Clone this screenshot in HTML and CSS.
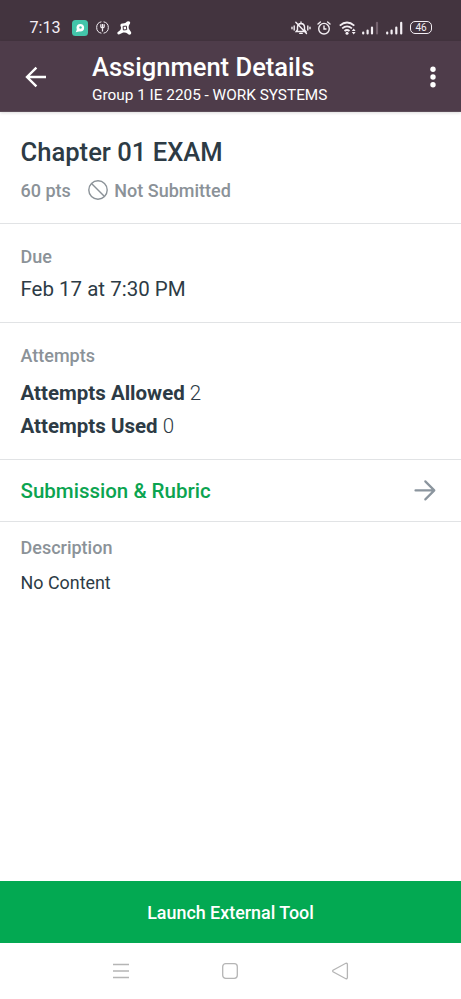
FILE: index.html
```html
<!DOCTYPE html>
<html lang="en">
<head>
<meta charset="utf-8">
<title>Assignment Details</title>
<link rel="stylesheet" href="styles.css">
</head>
<body>
<div class="status">
  <span class="clock">7:13</span>
  <svg class="s-chat" width="16" height="16" viewBox="0 0 16 16"><rect width="16" height="16" rx="3.5" fill="#43c5aa"/><circle cx="8.3" cy="7.7" r="3.8" fill="#fff"/><path d="M3.8 12.2L5.2 8.8L7.6 11.2Z" fill="#fff"/><circle cx="8.5" cy="7.5" r="1.2" fill="#43c5aa"/></svg>
  <svg class="s-fork" width="13" height="13" viewBox="0 0 13 13" fill="none" stroke="#f4eff4"><path d="M5.4 .8A5.8 5.8 0 0 0 5.4 12.2M7.6 .8A5.8 5.8 0 0 1 7.6 12.2" stroke-width="1"/><path d="M4.8 3.3V5.5Q4.8 6.8 6.5 6.8T8.2 5.5V3.3M6.5 3V10.6" stroke-width="1.2"/></svg>
  <svg class="s-avast" width="15" height="14" viewBox="0 0 15 14"><path d="M4 3.1Q4.4 2.3 5.6 2.6Q8.5 2.7 10.1 .6Q11.6-.4 12.9 .8Q13.6 2.2 12.4 3.6Q11.1 5.4 12 8.1L14 10.9Q14.7 12.6 13.2 13.5Q12 14 10.7 12.8Q8.8 11 6.2 11.5L2.5 13.3Q.8 13.7.3 12.2Q.1 11 1.5 10.4Q4.4 9 4 6.4L3.4 4.4Q3.3 3.5 4 3.1Z" fill="#fff"/><path d="M6.1 5.4L9.4 5.1L9.7 8.6L6.4 9Z" fill="none" stroke="#44343f" stroke-width="1"/></svg>
  <svg class="s-bell" width="20" height="14" viewBox="0 0 20 14" fill="none" stroke="#f4eff4" stroke-width="1.4" stroke-linecap="round"><path d="M5.2 10.5H14.8L13.5 8.8V5.8Q13.2 2.7 10 2.5Q6.8 2.7 6.5 5.8V8.8ZM10 1V2.5M8.8 12.4H11.2M4.8 1.3L15.5 12.6M3.2 5V9M1 6.2V7.8M16.8 5V9M19 6.2V7.8"/></svg>
  <svg class="s-alarm" width="14" height="14" viewBox="0 0 14 14" fill="none" stroke="#f4eff4" stroke-width="1.4" stroke-linecap="round"><circle cx="7" cy="7.7" r="5.3"/><path d="M7 5V8H9M1 3L3.4 1M13 3L10.6 1"/></svg>
  <svg class="s-wifi" width="18" height="14" viewBox="0 0 18 14" fill="none" stroke="#f4eff4" stroke-width="1.8"><path d="M.8 4.6Q8 -1.7 15.3 4.6M3.2 7.4Q8 3.3 12.9 7.4M5.5 10Q8 7.9 10.5 10"/><circle cx="8" cy="12.2" r="1.5" fill="#f4eff4" stroke="none"/><path d="M12.8 10L14.7 7.5L16.6 10ZM12.8 11L14.7 13.5L16.6 11Z" fill="#f4eff4" stroke="none"/></svg>
  <svg class="s-sig1" width="17" height="14" viewBox="0 0 17 14" fill="none" stroke="#f4eff4" stroke-width="2.2" stroke-linecap="round"><path d="M1.2 11.5V12.5M5.6 9.5V12.5M10 6.5V12.5"/><path d="M15 1.8V12.5" stroke="#75636f"/></svg>
  <svg class="s-sig2" width="17" height="14" viewBox="0 0 17 14" fill="none" stroke="#f4eff4" stroke-width="2.2" stroke-linecap="round"><path d="M1.2 11.5V12.5M5.6 9.5V12.5M10.3 6.5V12.5M15.2 1.8V12.5"/></svg>
  <span class="battery">46</span>
</div>
<header class="appbar">
  <svg class="back" width="22" height="22" viewBox="0 0 22 22" fill="none" stroke="#fff" stroke-width="2.4"><path d="M21 11H2.2M11.4 1.6L2 11L11.4 20.4"/></svg>
  <div class="titles">
    <h1>Assignment Details</h1>
    <p>Group 1 IE 2205 - WORK SYSTEMS</p>
  </div>
  <svg class="more" width="6" height="22" viewBox="0 0 6 22" fill="#fff"><circle cx="3" cy="3.3" r="2.7"/><circle cx="3" cy="11" r="2.7"/><circle cx="3" cy="18.7" r="2.7"/></svg>
</header>
<main>
  <section class="summary">
    <h2>Chapter 01 EXAM</h2>
    <div class="meta">
      <span class="points">60 pts</span>
      <svg width="22" height="22" viewBox="0 0 22 22" fill="none" stroke="#8b9298" stroke-width="1.4"><circle cx="11" cy="11" r="9.2"/><path d="M4.5 4.5L17.5 17.5"/></svg>
      <span class="state">Not Submitted</span>
    </div>
  </section>
  <section class="due">
    <h3>Due</h3>
    <p class="date">Feb 17 at 7:30 PM</p>
  </section>
  <section class="attempts">
    <h3>Attempts</h3>
    <p class="allowed"><b>Attempts Allowed</b> <span>2</span></p>
    <p class="used"><b>Attempts Used</b> <span>0</span></p>
  </section>
  <section class="rubric">
    <span>Submission &amp; Rubric</span>
    <svg width="22" height="22" viewBox="0 0 22 22" fill="none" stroke="#8b959e" stroke-width="2.2" stroke-linecap="round" stroke-linejoin="round"><path d="M1.5 11.4H20.2M11.3 2.4L20.3 11.4L11.3 20.4"/></svg>
  </section>
  <section class="description">
    <h3>Description</h3>
    <p>No Content</p>
  </section>
</main>
<button class="launch">Launch External Tool</button>
<nav>
  <svg width="18" height="18" viewBox="0 0 18 18" fill="none" stroke="#b5b5b5" stroke-width="1.3"><path d="M1 2.5H17M1 9H17M1 15.5H17"/></svg>
  <svg width="18" height="18" viewBox="0 0 18 18" fill="none" stroke="#b5b5b5" stroke-width="1.3"><rect x="1.7" y="1.7" width="14.6" height="14.6" rx="3"/></svg>
  <svg width="18" height="18" viewBox="0 0 18 18" fill="none" stroke="#b5b5b5" stroke-width="1.3"><path d="M2 8.2Q1.2 9 2 9.8L14.8 16.7Q16.2 17 16.4 15.7V2.3Q16.2 1 14.8 1.3Z"/></svg>
</nav>
</body>
</html>
```
FILE: styles.css
```css
* { box-sizing: border-box; }
body {
  margin: 0;
  height: 999px;
  display: flex;
  flex-direction: column;
  background: #fff;
  color: #2d3b45;
  font-family: Roboto, "Liberation Sans", sans-serif;
}
h1, h2, h3, p { margin: 0; font-weight: 500; }
svg { display: block; flex: none; }

.status {
  height: 41px;
  padding: 15px 29px 0 29.5px;
  display: flex;
  align-items: flex-start;
  flex: none;
  background: #43343f;
  color: #f4eff4;
}
.status svg { margin-top: 6px; }
.clock { width: 42px; font-size: 16.2px; line-height: 26px; }
.status .s-chat { margin-top: 5px; }
.s-fork { margin-left: 8px; }
.s-avast { margin-left: 8px; }
.s-bell { margin-left: auto; }
.s-alarm { margin-left: 6px; }
.s-wifi { margin-left: 8px; }
.s-sig1 { margin-left: 5px; }
.s-sig2 { margin-left: 7px; }
.battery {
  width: 22px;
  height: 13px;
  margin: 6px 0 0 7px;
  border: 1.5px solid #f4eff4;
  border-radius: 5px;
  font-size: 10px;
  line-height: 11px;
  text-align: center;
}

.appbar {
  height: 71px;
  flex: none;
  display: flex;
  align-items: center;
  padding: 0 25px;
  background: #4e3c4a;
  color: #fff;
  border-bottom: 1px solid #5d4d59;
  box-shadow: 0 1px 3px rgba(0, 0, 0, .14);
}
.appbar svg { margin-top: 1px; }
.titles { margin-left: 45px; padding-top: 4px; flex: 1; }
.appbar h1 { font-size: 25.55px; line-height: 30px; }
.appbar p { font-size: 15.35px; line-height: 20px; margin-top: 3px; font-weight: 400; }

main { flex: 1; }
section { border-bottom: 1px solid #e1e3e5; padding: 0 20.5px; }
h3 { color: #8b9298; font-size: 18px; line-height: 22px; }

.summary { height: 111.5px; padding-top: 25px; }
.summary h2 { font-size: 25.6px; line-height: 30px; }
.meta { display: flex; margin-top: 13px; color: #8b9298; font-size: 18px; line-height: 22px; font-weight: 500; }
.meta svg { margin: -1px 5.5px 0 16px; }

.due { height: 99px; padding-top: 22.5px; }
.date { margin-top: 8px; font-size: 20.5px; line-height: 26px; font-weight: 400; }

.attempts { height: 137px; padding-top: 22.5px; }
.attempts p { font-size: 20.5px; line-height: 26px; font-weight: 400; }
.attempts b { font-weight: 700; }
.attempts p span { font-weight: 300; }
.allowed { margin-top: 13px; }
.used { margin-top: 7px; }

.rubric { height: 62px; display: flex; align-items: center; justify-content: space-between; padding-right: 25px; color: #0ba450; font-size: 20.5px; font-weight: 500; }
.rubric span { padding-top: 2px; }

.description { border: 0; padding-top: 15px; }
.description p { margin-top: 13px; font-size: 17.9px; line-height: 22px; font-weight: 400; }

.launch {
  height: 61.5px;
  flex: none;
  border: 0;
  padding: 2px 0 0;
  background: #03a952;
  color: #fff;
  font: 500 17.9px Roboto, "Liberation Sans", sans-serif;
}
nav {
  height: 56.5px;
  flex: none;
  display: flex;
  justify-content: space-between;
  align-items: center;
  padding: 0 112px 0 111.5px;
}
```
